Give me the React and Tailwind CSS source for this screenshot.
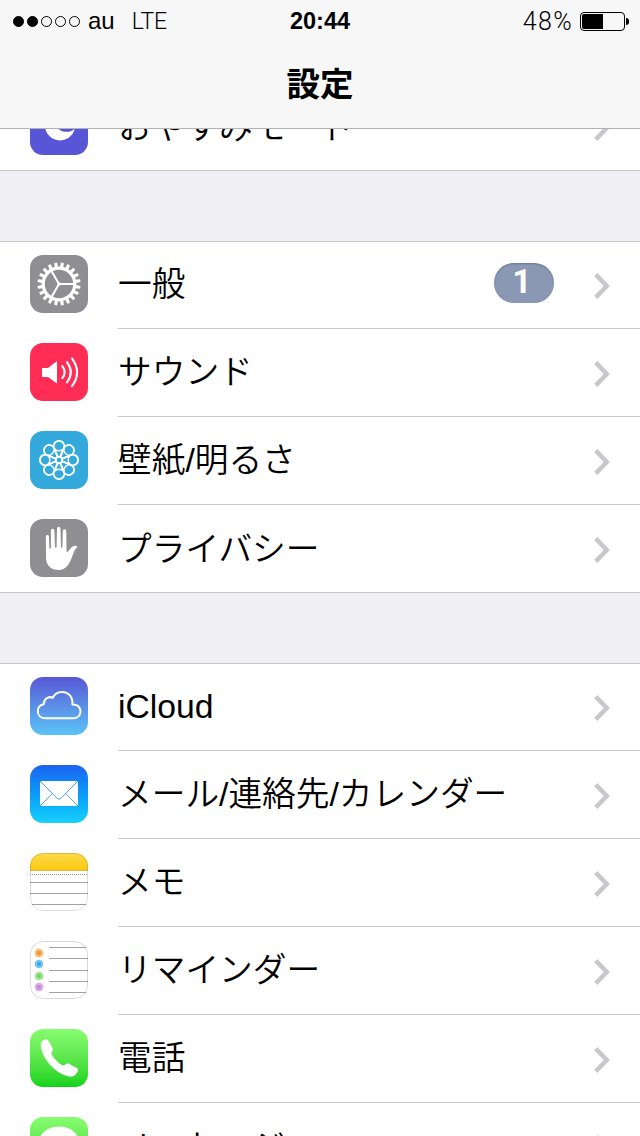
import React from 'react';

const GeneralIcon = () => (
    <svg viewBox="0 0 58 58" className="w-full h-full" fill="none" stroke="#fff">
        <circle cx="29" cy="29" r="15.8" strokeWidth="3.2" />
        {Array.from({ length: 20 }, (_, i) => (
            <path key={i} d="M27.2 13 L27.6 7.4 L30.4 7.4 L30.8 13 Z" fill="#fff" stroke="none" transform={`rotate(${i * 18 + 9} 29 29)`} />
        ))}
        {[0, 120, 240].map(angle => (
            <path key={angle} d="M29 29 H44" strokeWidth="2" transform={`rotate(${angle} 29 29)`} />
        ))}
        <circle cx="29" cy="29" r="1.8" fill="#fff" stroke="none" />
    </svg>
);

const SoundIcon = () => (
    <svg viewBox="0 0 58 58" className="w-full h-full" fill="none" stroke="#fff" strokeWidth="2.1" strokeLinecap="round">
        <path d="M12 25 H18 L27 18 V40.5 L18 34 H12 Z" fill="#fff" stroke="none" />
        <path d="M32.3 23.2 Q37 29.3 32.3 35.2" />
        <path d="M37 19.2 Q44.6 29.3 37 39.3" />
        <path d="M42 15.3 Q52.2 29.3 42 43.2" />
    </svg>
);

const WallpaperIcon = () => (
    <svg viewBox="0 0 58 58" className="w-full h-full" fill="none" stroke="#fff" strokeWidth="1.8">
        {Array.from({ length: 8 }, (_, i) => (
            <g key={i} transform={`rotate(${i * 45} 29 29)`}>
                <path d="M24.2 17.8 A5.4 5.4 0 1 1 33.8 17.8 L30.3 25.6 M24.2 17.8 L27.7 25.6" />
                <path d="M24.4 18 Q29 21.6 33.6 18" strokeWidth="1.4" />
            </g>
        ))}
        <circle cx="29" cy="29" r="3.2" />
    </svg>
);

const PrivacyIcon = () => (
    <svg viewBox="0 0 58 58" className="w-full h-full" fill="#fff">
        <path d="M15.8 17.2 a1.6 1.6 0 0 1 3.1 0 L19.4 29.5 H20.9 V11.5 a1.7 1.7 0 0 1 3.5 0 L25 28.5 H26.6 L27 9.4 a1.7 1.7 0 0 1 3.5 0 L31 28.5 H32.4 L32.8 12 a1.7 1.7 0 0 1 3.5 0 L36.6 33.3 C38.3 33 40.2 29.3 42 28 C43.5 26.9 46.3 26.4 47.3 27.4 C47.8 28 46 29.2 45.2 30.4 C43 34 41.4 41 38.6 45.2 C36.2 49 32.8 51 28.6 51 C21 51 16.2 46.5 16 39 Z" />
    </svg>
);

const CloudIcon = () => (
    <svg viewBox="0 0 58 58" className="w-full h-full" fill="none" stroke="#fff" strokeWidth="2" strokeLinejoin="round">
        <path d="M15.5 41.3 C10.8 41.3 7.8 38.3 7.8 34.2 C7.8 30.8 10.2 28 13.7 27.2 C13.5 22.6 18.2 18.6 22.8 20.8 C24.6 16.9 28 14.9 32 14.9 C38.6 14.9 43 20 42.4 27.4 C47.3 27.1 50.5 30.2 50.5 34.2 C50.5 38.4 47.4 41.3 43 41.3 Z" />
    </svg>
);

const MailIcon = () => (
    <svg viewBox="0 0 58 58" className="w-full h-full" fill="none">
        <rect x="10" y="16" width="38" height="25" fill="#fff" />
        <path d="M10 16 L27 33.2 Q29 35.3 31 33.2 L48 16 M10 41 L22.3 28.5 M48 41 L35.7 28.5" stroke="#4f9fe8" strokeWidth="1" />
    </svg>
);

const NotesIcon = () => (
    <svg viewBox="0 0 58 58" className="w-full h-full">
        <defs>
            <linearGradient id="notesTop" x1="0" y1="0" x2="0" y2="1">
                <stop offset="0" stopColor="#fdda4c" />
                <stop offset="1" stopColor="#fcc80c" />
            </linearGradient>
        </defs>
        <rect width="58" height="18" fill="url(#notesTop)" />
        <path d="M0 17.5 H58" stroke="#d3b553" />
        <path d="M0 21.5 H58" stroke="#999" strokeDasharray="1 1" />
        <path d="M0 29.5 H58 M0 40.5 H58 M0 51.5 H58" stroke="#a2a2a2" />
        <rect x="0.5" y="0.5" width="57" height="57" rx="12.5" fill="none" stroke="#000" strokeOpacity="0.13" />
    </svg>
);

const reminderDots = [
    { y: 12, color: '#f8982c' },
    { y: 23, color: '#35aaf0' },
    { y: 35, color: '#6fd959' },
    { y: 46, color: '#c983dd' },
];

const RemindersIcon = () => (
    <svg viewBox="0 0 58 58" className="w-full h-full" fill="none">
        {reminderDots.map(dot => (
            <g key={dot.y}>
                <circle cx="9" cy={dot.y} r="3.8" fill={dot.color} fillOpacity="0.6" stroke={dot.color} strokeWidth="0.6" />
                <circle cx="9" cy={dot.y} r="2.2" fill={dot.color} />
            </g>
        ))}
        <path d="M19 6.5 H57 M19 17.5 H58 M19 29.5 H58 M19 40.5 H58 M19 51.5 H57" stroke="#a2a2a2" />
        <rect x="0.5" y="0.5" width="57" height="57" rx="12.5" stroke="#000" strokeOpacity="0.15" />
    </svg>
);

const PhoneIcon = () => (
    <svg viewBox="0 0 58 58" className="w-full h-full" fill="#fff">
        <path d="M10.8 14.5 C11.2 12.2 13.6 10.7 15.6 10.2 C16.8 10 17.6 10.6 18.2 11.6 L22.6 18.8 C23.4 20.2 23 21.2 22.2 22.2 C21.2 23.3 21 24 21.6 25.2 C23.6 29 28 33.6 31.8 36 C33.2 36.8 34.2 36.6 35.2 35.6 C36.3 34.5 37.4 34.2 38.8 34.8 L46.8 39 C48.2 39.8 48.4 41 47.7 42.6 C46.6 45.2 44.6 47.2 42 47.6 C37.5 48.2 29.5 44.6 23 38.8 C16 32.6 10 21.5 10.8 14.5 Z" />
    </svg>
);

const MoonIcon = () => (
    <svg viewBox="0 0 58 58" className="w-full h-full">
        <circle cx="30" cy="28.5" r="15" fill="#fff" />
        <circle cx="36.5" cy="22.3" r="12.5" fill="#5856d6" />
    </svg>
);

const MessageIcon = () => (
    <svg viewBox="0 0 58 58" className="w-full h-full" fill="#fff">
        <ellipse cx="29" cy="26.5" rx="20.5" ry="17" />
        <path d="M17 38 C17 43 15 45.5 12 47 C17 47.5 21 46 24 42 Z" />
    </svg>
);

const groups = [
    [
        { label: 'おやすみモード', Icon: MoonIcon, bg: 'bg-[#5856d6]' },
    ],
    [
        { label: '一般', Icon: GeneralIcon, bg: 'bg-[#8e8e93]', badge: 1 },
        { label: 'サウンド', Icon: SoundIcon, bg: 'bg-[#ff2d55]' },
        { label: '壁紙/明るさ', Icon: WallpaperIcon, bg: 'bg-[#34aadc]' },
        { label: 'プライバシー', Icon: PrivacyIcon, bg: 'bg-[#8e8e93]' },
    ],
    [
        { label: 'iCloud', Icon: CloudIcon, bg: 'bg-linear-to-b from-[#5756d5] to-[#5ac4f7]' },
        { label: 'メール/連絡先/カレンダー', Icon: MailIcon, bg: 'bg-linear-to-b from-[#1d62f0] to-[#1ad0fd]' },
        { label: 'メモ', Icon: NotesIcon, bg: 'bg-white' },
        { label: 'リマインダー', Icon: RemindersIcon, bg: 'bg-white' },
        { label: '電話', Icon: PhoneIcon, bg: 'bg-linear-to-b from-[#87fc70] to-[#0bd318]' },
        { label: 'メッセージ', Icon: MessageIcon, bg: 'bg-linear-to-b from-[#87fc70] to-[#0bd318]' },
    ],
];

const StatusBar = () => (
    <div className="h-10 pt-0.5 grid grid-cols-3 items-center text-2xl leading-none">
        <div className="flex items-center pl-[13px]">
            <div className="flex gap-[3px] mr-2">
                {[1, 2, 3, 4, 5].map(n => (
                    <span key={n} className={`w-[11px] h-[11px] rounded-full border border-black ${n <= 2 ? 'bg-black' : ''}`} />
                ))}
            </div>
            <span>au</span>
            <span className="ml-[17px] font-[Roboto] font-light text-[23px] tracking-[-0.3px]">LTE</span>
        </div>
        <div className="pt-0.5 text-center text-[23.5px] font-bold">20:44</div>
        <div className="flex items-center justify-end pr-[11px]">
            <span className="font-[Roboto] font-light text-[25px] tracking-[1.3px] mr-[7px]">48%</span>
            <div className="w-[45px] h-[19px] p-px rounded-[4px] border border-black">
                <div className="w-[21px] h-full bg-black rounded-l-[2px]" />
            </div>
            <div className="w-[3px] h-[7px] ml-px bg-black rounded-r-full" />
        </div>
    </div>
);

const Chevron = () => (
    <svg viewBox="0 0 16 26" className="w-4 h-[26px] mt-0.5" fill="none" stroke="#c7c7cc" strokeWidth="4.4">
        <path d="M1.8 1.6 L12.8 13 L1.8 24.4" />
    </svg>
);

const SettingsRow = ({ label, Icon, bg, badge, last }) => (
    <div className="h-[88px] flex pl-[30px]">
        <div className={`w-[58px] h-[58px] mt-3.5 mr-[30px] shrink-0 rounded-[13px] overflow-hidden ${bg}`}>
            <Icon />
        </div>
        <div className={`flex-1 flex items-center pr-[30px] ${last ? '' : 'border-b border-[#c8c7cc]'}`}>
            <span className="flex-1 pt-px whitespace-nowrap">{label}</span>
            {badge && (
                <span className="w-[60px] h-10 mr-10 mb-1 pr-1 pb-0.5 flex items-center justify-center rounded-full bg-[#8a98b3] text-white font-[Roboto] font-bold shadow-[inset_0_1px_2px_rgba(60,70,100,0.4)]">
                    {badge}
                </span>
            )}
            <Chevron />
        </div>
    </div>
);

const App = () => {
    return (
        <div className="w-[640px] h-[1136px] overflow-hidden bg-[#efeff4] text-black font-['Liberation_Sans','Noto_Sans_CJK_JP_DemiLight','Noto_Sans_CJK_JP',sans-serif]">
            <header className="relative z-10 h-[129px] bg-[#f7f7f8] border-b border-[#b2b2b4]">
                <StatusBar />
                <h1 className="h-[85px] flex items-center justify-center text-[33.5px] font-bold font-['Noto_Sans_CJK_JP',sans-serif]">設定</h1>
            </header>

            {/* List is scrolled so the first row sits partly under the header */}
            <main className="-mt-[46px] flex flex-col gap-[70px] text-[33.7px] leading-none">
                {groups.map((rows, index) => (
                    <section key={index} className="bg-white shadow-[inset_0_1px_0_#c8c7cc,inset_0_-1px_0_#c8c7cc]">
                        {rows.map((row, i) => (
                            <SettingsRow key={row.label} {...row} last={i === rows.length - 1} />
                        ))}
                    </section>
                ))}
            </main>
        </div>
    );
};

export default App;
